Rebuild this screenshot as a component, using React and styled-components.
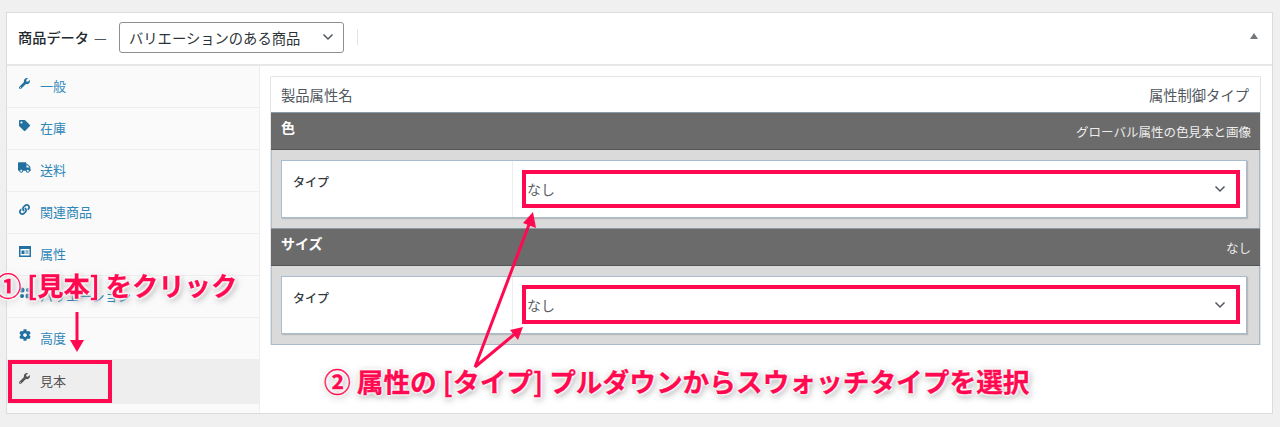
import React from "react";
import styled, { createGlobalStyle } from "styled-components";
import { FaWrench, FaTag, FaTruck, FaLink, FaCog } from "react-icons/fa";

const Global = createGlobalStyle`
  html, body { margin: 0; padding: 0; background: #f0f0f1; }
  body { font-family: "Noto Sans CJK JP", "Liberation Sans", sans-serif; color: #3c434a; font-size: 13px; overflow: hidden; }
`;

const Page = styled.div`
  position: relative;
  width: 1280px;
  height: 427px;
  padding: 12px 7px 0 6px;
  box-sizing: border-box;
  overflow: hidden;
  filter: blur(0.4px);
`;
const Panel = styled.section`
  height: 402px;
  box-sizing: border-box;
  background: #fff;
  border: 1px solid #dcdcde;
  display: flex;
  flex-direction: column;
`;
const Header = styled.header`
  height: 53px;
  flex: none;
  box-sizing: border-box;
  border-bottom: 2px solid #e6e7e8;
  display: flex;
  align-items: center;
  padding: 0 14px 3px 11px;
`;
const Title = styled.span`
  font-size: 14.2px;
  font-weight: 500;
  color: #23282d;
  width: 101px;
  white-space: nowrap;
`;
const Dash = styled.span`
  font-weight: 400;
  color: #50575e;
  margin-left: 5px;
`;
const TypeSelect = styled.div`
  width: 225px;
  height: 31px;
  box-sizing: border-box;
  border: 1px solid #8c8f94;
  border-radius: 3px;
  display: flex;
  align-items: center;
  justify-content: space-between;
  padding: 0 9px 0 9px;
  font-size: 14.3px;
  color: #2c3338;
`;
const Divider = styled.span`
  width: 1px;
  height: 16px;
  background: #e2e4e7;
  margin-left: 13px;
`;
const Collapse = styled.span`
  margin-left: auto;
  width: 0;
  height: 0;
  border-left: 4px solid transparent;
  border-right: 4px solid transparent;
  border-bottom: 6px solid #72777c;
  margin-top: -2px;
`;
const Body = styled.div`
  flex: 1;
  display: flex;
  min-height: 0;
`;
const Sidebar = styled.nav`
  width: 253px;
  flex: none;
  box-sizing: border-box;
  background: #fafafa;
  border-right: 1px solid #eee;
  display: flex;
  flex-direction: column;
`;
const Tab = styled.div`
  height: ${(p) => (p.$active ? "44px" : "42px")};
  flex: none;
  box-sizing: border-box;
  display: flex;
  align-items: center;
  gap: 9px;
  padding: 0 0 3px 11px;
  border-bottom: ${(p) => (p.$active ? "0" : "1px solid #eee")};
  background: ${(p) => (p.$active ? "#eee" : "transparent")};
  color: ${(p) => (p.$active ? "#555" : "#2f86b8")};
  font-size: 13px;
  svg { flex: none; color: ${(p) => (p.$active ? "#555" : "#2271a1")}; }
`;
const IconSlot = styled.span`
  width: 13px;
  height: 14px;
  display: flex;
  align-items: center;
  justify-content: center;
  margin-top: -4px;
`;
const Main = styled.div`
  flex: 1;
  padding: 10px 11px 0 10px;
`;
const Attrs = styled.div`
  border: 1px solid #e2e4e7;
  border-radius: 2px 2px 0 0;
  border-bottom: 0;
`;
const AttrHead = styled.div`
  height: 35px;
  box-sizing: border-box;
  display: flex;
  justify-content: space-between;
  align-items: center;
  padding: 0 11px 0 10px;
  font-size: 14.3px;
  color: #50575e;
`;
const Bar = styled.div`
  height: 38px;
  box-sizing: border-box;
  background: #6b6b6b;
  border-top: 1px solid #8b9aa8;
  border-bottom: 1px solid #555;
  display: flex;
  justify-content: space-between;
  align-items: center;
  padding: 0 9px 0 10px;
  color: #fff;
`;
const BarName = styled.strong`
  font-size: 14px;
  font-weight: 700;
  margin-top: -8px;
`;
const BarMeta = styled.span`
  font-size: 12.5px;
  color: #ededed;
  margin-top: 1px;
`;
const Well = styled.div`
  background: #dadada;
  padding: 10px 12px 10px 9px;
  border-left: 1px solid #b4c0cc;
  border-right: 1px solid #a9b9c9;
  &:last-child { border-bottom: 1px solid #a9b9c9; }
`;
const Card = styled.div`
  height: 58px;
  box-sizing: border-box;
  background: #fff;
  border: 1px solid #a9bccd;
  box-shadow: 1px 1px 1px rgba(0,0,0,.15);
  display: grid;
  grid-template-columns: 231px 1fr;
`;
const Label = styled.div`
  padding: 12px 0 0 11px;
  font-size: 12px;
  font-weight: 500;
  color: #32373c;
  border-right: 1px solid #eee;
`;
const Value = styled.div`
  display: flex;
  align-items: center;
  justify-content: space-between;
  padding: 0 20px 1px 14px;
  font-size: 14px;
  color: #5a6066;
`;
const Note = styled.div`
  position: absolute;
  left: ${(p) => p.$x}px;
  top: ${(p) => p.$y}px;
  white-space: nowrap;
  font-size: ${(p) => p.$size}px;
  font-weight: 700;
  line-height: 30px;
  color: #ff0a50;
  -webkit-text-stroke: 0.3px #ff0a50;
  text-shadow: 0 0 2px #fff, 0 0 2px #fff, 0 0 3px #fff, 0 0 3px #fff, 0 0 4px #fff, 0 0 4px #fff, 1px 2px 7px rgba(0,0,0,.55);
`;
const RedBox = styled.div`
  position: absolute;
  left: ${(p) => p.$x}px;
  top: ${(p) => p.$y}px;
  width: ${(p) => p.$w}px;
  height: ${(p) => p.$h}px;
  box-sizing: border-box;
  border: 4px solid #ff0a50;
`;
const Overlay = styled.svg`
  position: absolute;
  left: 0;
  top: 0;
`;

const Chevron = () => (
  <svg width="12" height="8" viewBox="0 0 12 8" fill="none" stroke="#50575e" strokeWidth="1.5">
    <path d="M1.5 1.5 6 6l4.5-4.5" />
  </svg>
);
const AttrIcon = () => (
  <svg width="12" height="11" viewBox="0 0 12 11" fill="#2271a1">
    <path d="M0 0h12v11H0zM1.5 3v6.5h9V3zM2.5 4.5h3v3.5h-3zM6.5 4.5h3v1h-3zM6.5 6.5h3v1h-3z" fillRule="evenodd" />
  </svg>
);
const VarIcon = () => (
  <svg width="12" height="12" viewBox="0 0 12 12" fill="#2271a1">
    <circle cx="3" cy="3" r="2.5" /><circle cx="9" cy="9" r="2.5" /><circle cx="3" cy="9" r="2" /><circle cx="9" cy="3" r="2" />
  </svg>
);

const tabs = [
  ["一般", <FaWrench size={11} />],
  ["在庫", <FaTag size={11} />],
  ["送料", <FaTruck size={13} />],
  ["関連商品", <FaLink size={11} />],
  ["属性", <AttrIcon />],
  ["バリエーション", <VarIcon />],
  ["高度", <FaCog size={12} />],
];

const Row = ({ name, meta }) => (
  <>
    <Bar>
      <BarName>{name}</BarName>
      <BarMeta>{meta}</BarMeta>
    </Bar>
    <Well>
      <Card>
        <Label>タイプ</Label>
        <Value>なし<Chevron /></Value>
      </Card>
    </Well>
  </>
);

export default function App() {
  return (
    <Page>
      <Global />
      <Panel>
        <Header>
          <Title>商品データ<Dash>—</Dash></Title>
          <TypeSelect>バリエーションのある商品<Chevron /></TypeSelect>
          <Divider />
          <Collapse />
        </Header>
        <Body>
          <Sidebar>
            {tabs.map(([t, i]) => (
              <Tab key={t}><IconSlot>{i}</IconSlot>{t}</Tab>
            ))}
            <Tab $active><IconSlot><FaWrench size={11} /></IconSlot>見本</Tab>
          </Sidebar>
          <Main>
            <Attrs>
              <AttrHead><span>製品属性名</span><span>属性制御タイプ</span></AttrHead>
              <Row name="色" meta="グローバル属性の色見本と画像" />
              <Row name="サイズ" meta="なし" />
            </Attrs>
          </Main>
        </Body>
      </Panel>
      <RedBox $x={522} $y={170} $w={718} $h={38} />
      <RedBox $x={522} $y={285} $w={718} $h={39} />
      <RedBox $x={8} $y={360} $w={104} $h={43} />
      <Overlay width="1280" height="427" viewBox="0 0 1280 427" fill="#ff0a50" stroke="#ff0a50">
        <path d="M77 312V342M475 367 530 222M475 367 516 333" strokeWidth="3" fill="none" />
        <path d="M70 340h14l-7 12z" stroke="none" />
        <path d="M533 212l3 16-13-5z" stroke="none" />
        <path d="M523 327l-5 13-8-10z" stroke="none" />
      </Overlay>
      <Note $x={-5} $y={270} $size={26.3}>① [見本] をクリック</Note>
      <Note $x={324} $y={366} $size={26.7}>② 属性の [タイプ] プルダウンからスウォッチタイプを選択</Note>
    </Page>
  );
}
